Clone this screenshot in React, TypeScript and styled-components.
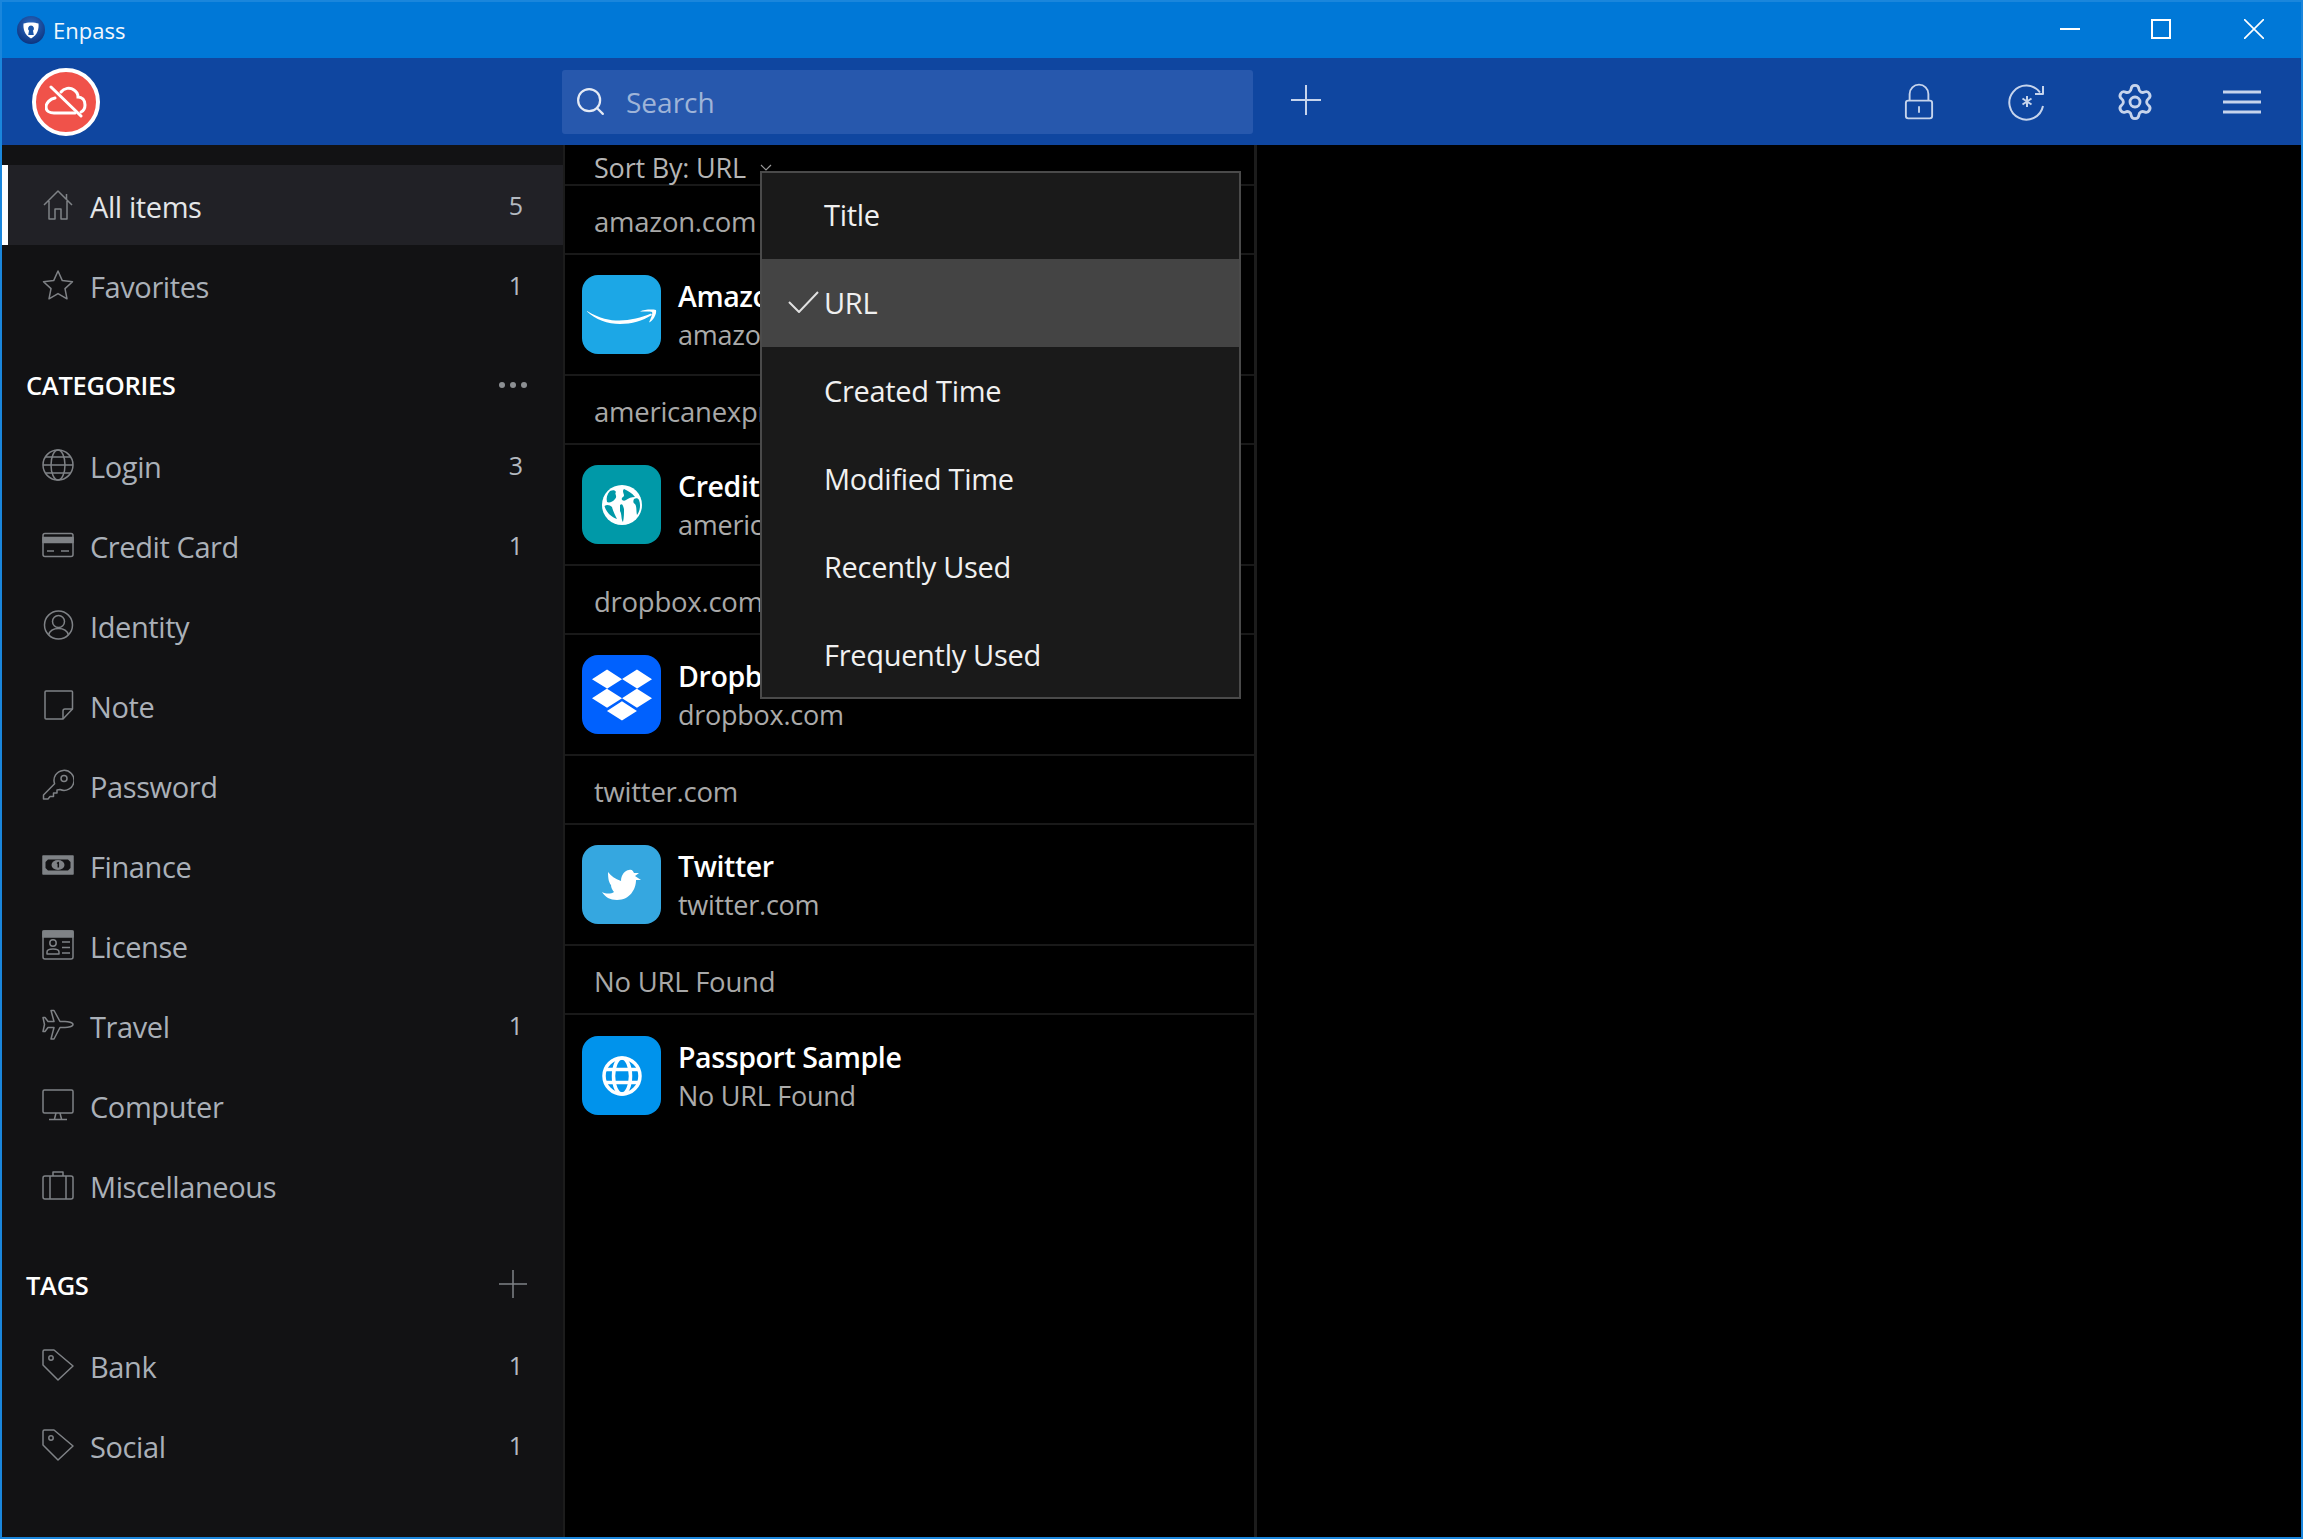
import React from 'react'
import styled, { createGlobalStyle } from 'styled-components'
import { Search as SearchGlyph, Settings } from 'lucide-react'
import { FaDropbox } from 'react-icons/fa'

const GlobalStyle = createGlobalStyle`
  html, body {
    margin: 0;
    padding: 0;
    background: #000;
    font-family: "Open Sans", "Noto Sans", sans-serif;
  }
  * { box-sizing: border-box; }
`

const Stroke: React.FC<{ size?: number; h?: number; vb?: string; width?: number; children: React.ReactNode }> = ({
  size = 32,
  h,
  vb = '0 0 32 32',
  width = 1.5,
  children
}) => (
  <svg
    width={size}
    height={h ?? size}
    viewBox={vb}
    fill="none"
    stroke="currentColor"
    strokeWidth={width}
    strokeLinejoin="round"
  >
    {children}
  </svg>
)

const icons: Record<string, React.ReactNode> = {
  home: (
    <Stroke>
      <path d="M2 16 16 2l14 14M24.500 10.500V5M7 12v18h6V20h6v10h6V12" />
    </Stroke>
  ),
  star: (
    <Stroke>
      <path d="M16 2l4.300 9.600 10.200 1.100L23 19.600l2 10.200-9-5.200-9 5.200 2-10.200-7.500-6.900 10.200-1.100z" />
    </Stroke>
  ),
  globe: (
    <Stroke>
      <circle cx="16" cy="16" r="15" />
      <ellipse cx="16" cy="16" rx="7" ry="15" />
      <path d="M1 16h30M3.500 8h25M3.500 24h25" />
    </Stroke>
  ),
  card: (
    <Stroke>
      <rect x="1" y="4.500" width="30" height="23" rx="2" />
      <rect x="1" y="8.500" width="30" height="5" fill="currentColor" />
      <path d="M5 22h7M19 22h8" />
    </Stroke>
  ),
  identity: (
    <Stroke>
      <circle cx="16.500" cy="16" r="14" />
      <circle cx="16.500" cy="12.500" r="6" />
      <path d="M6.500 26c1.500-5 6-6.500 10-6.500s8.500 1.500 10 6.500" />
    </Stroke>
  ),
  note: (
    <Stroke>
      <path d="M4 2h25.500a1 1 0 0 1 1 1v17L21 30H4a1 1 0 0 1-1-1V3a1 1 0 0 1 1-1z" />
      <path d="M30.500 20H23a2 2 0 0 0-2 2v8" />
    </Stroke>
  ),
  key: (
    <Stroke>
      <path d="M12.600 14.700a10 10 0 1 1 5.400 5.800l-3 .5v3h-3.500v3.500H8L6 30H1.500v-4z" />
      <circle cx="22" cy="9.500" r="3" />
    </Stroke>
  ),
  finance: (
    <Stroke>
      <path d="M1 7h30v18H1z" fill="currentColor" />
      <path d="M6 10.500h20l2.500 2.500v6L26 21.500H6L3.500 19v-6z" fill="#121214" stroke="none" />
      <ellipse cx="16" cy="16" rx="6.500" ry="5" fill="currentColor" stroke="none" />
      <path d="M15 14.500l1.300-1v5" stroke="#121214" />
    </Stroke>
  ),
  license: (
    <Stroke>
      <rect x="1" y="2" width="30" height="28" rx="2" />
      <rect x="1" y="2" width="30" height="6" fill="currentColor" />
      <circle cx="11" cy="14" r="3.200" />
      <path d="M5 25v-2c0-2 2-3 6-3s6 1 6 3v2zM20 13h8M20 18.500h8M20 24h8" />
    </Stroke>
  ),
  plane: (
    <Stroke>
      <path d="M31 15.500c0-2-5-3-8-3h-5L12 1.500H9l3 11H6l-3-4H1l1.500 7L1 22.500h2l3-4h6l-3 11.500h3l6-11.500h5c3 0 8-1 8-3z" />
    </Stroke>
  ),
  monitor: (
    <Stroke>
      <rect x="1" y="1" width="30" height="23" rx="1.500" />
      <path d="M14 24l-1.500 6M18 24l1.500 6M7 30.500h18" />
    </Stroke>
  ),
  case: (
    <Stroke>
      <rect x="1" y="7" width="30" height="23" rx="2" />
      <path d="M11 7V3h10v4M8 7v23M24 7v23" />
    </Stroke>
  ),
  tag: (
    <Stroke>
      <path d="M2.500 1H12l19 16-15 14L1 16V2.500A1.500 1.500 0 0 1 2.500 1z" />
      <circle cx="9" cy="9" r="2.200" />
    </Stroke>
  )
}

const categories = [
  { icon: 'globe', label: 'Login', count: 3 },
  { icon: 'card', label: 'Credit Card', count: 1 },
  { icon: 'identity', label: 'Identity' },
  { icon: 'note', label: 'Note' },
  { icon: 'key', label: 'Password' },
  { icon: 'finance', label: 'Finance' },
  { icon: 'license', label: 'License' },
  { icon: 'plane', label: 'Travel', count: 1 },
  { icon: 'monitor', label: 'Computer' },
  { icon: 'case', label: 'Miscellaneous' }
]

const AmazonIcon = () => (
  <svg width="79" height="79" viewBox="0 0 79 79" fill="#fff">
    <path d="M5 36C18 44 28 45.500 37 45.500 48 45.500 60 42.500 69 38.500L70 40C60 46 50 49 38 49 26 49 13 44.500 5 36.500Z" />
    <path d="M58 36.500C62 34.500 70 34 74 35 75 39 71 46 67 47.500 69 43 71 38.500 70 37 68 36 62 36.500 58 36.500Z" />
  </svg>
)

const EarthIcon = () => (
  <svg width="40" height="40" viewBox="0 0 40 40">
    <circle cx="20" cy="20" r="20" fill="#fff" />
    <g fill="#0099a8">
      <path d="M8 6C11 5 13 5 14 7 12 9 16 11 13 14 11 17 7 18 5 17 4 13 5 9 8 6Z" />
      <path d="M22 4C26 6 30 8 33 12 29 12 27 13 24 15 21 17 18 14 21 12 24 10 19 7 22 4Z" />
      <path d="M2.500 21C5 19 8 20 10 22 11 26 13 30 15 34 9 32 4 27 2.500 21Z" />
      <path d="M18 20C20 18 21 20 22 24 22 28 22 33 21 37 19 35 20 29 18 26Z" />
      <path d="M32 14C34 13 36 13 37 15 39 20 38 26 35 30 34 26 35 22 33 19 31 18 31 16 32 14Z" />
    </g>
  </svg>
)

const BirdIcon = () => (
  <svg width="40" height="32" viewBox="0 0 40 32" fill="#fff">
    <path d="M0 23C4 25 9 25 12 23 10 21 9 18 9 16 7 14 6 10 6 3 9 7 13 10 19 12 19 6 23 1 27 1 30 0 31 2 32 4L37 4 33 7 39 11 34 11C34 20 28 31 15 31 8 31 3 28 0 23Z" />
  </svg>
)

const WebIcon = () => (
  <svg width="40" height="40" viewBox="0 0 40 40" fill="none" stroke="#fff" strokeWidth="3.500">
    <circle cx="20" cy="20" r="18" />
    <ellipse cx="20" cy="20" rx="8.500" ry="18" />
    <path d="M4 13.500h32M4 26.500h32" />
  </svg>
)

const groups = [
  { site: 'amazon.com', title: 'Amazon', sub: 'amazon.com', bg: '#1ca7e6', icon: <AmazonIcon /> },
  { site: 'americanexpress.com', title: 'Credit Card', sub: 'americanexpress.com', bg: '#0099a8', icon: <EarthIcon /> },
  { site: 'dropbox.com', title: 'Dropbox', sub: 'dropbox.com', bg: '#0061fe', icon: <FaDropbox size={60} /> },
  { site: 'twitter.com', title: 'Twitter', sub: 'twitter.com', bg: '#35a7e0', icon: <BirdIcon /> },
  { site: 'No URL Found', title: 'Passport Sample', sub: 'No URL Found', bg: '#0093ec', icon: <WebIcon /> }
]

const sortOptions = ['Title', 'URL', 'Created Time', 'Modified Time', 'Recently Used', 'Frequently Used']

const App: React.FC = () => {
  return (
    <Window>
      <GlobalStyle />
      <TitleBar>
        <TitleLogo>
          <svg width="28" height="28" viewBox="0 0 28 28">
            <defs>
              <radialGradient id="enp" cx="50%" cy="35%" r="65%">
                <stop offset="0%" stopColor="#2f6fc7" />
                <stop offset="100%" stopColor="#0c3480" />
              </radialGradient>
            </defs>
            <circle cx="14" cy="14" r="14" fill="url(#enp)" />
            <path d="M6.500 7.500C10 6 18 6 21.500 7.500 22 13 20.500 19 14 22.500 7.500 19 6 13 6.500 7.500Z" fill="#fff" />
            <path d="M14 9.500a3 3 0 0 1 2 5.200l.8 4.300h-5.600l.8-4.300a3 3 0 0 1 2-5.200Z" fill="#1b55a8" />
          </svg>
        </TitleLogo>
        <TitleText>Enpass</TitleText>
        <WindowButtons>
          <WindowButton>
            <svg width="20" height="20" viewBox="0 0 20 20" stroke="#fff" strokeWidth="2">
              <path d="M0 10h20" />
            </svg>
          </WindowButton>
          <WindowButton>
            <svg width="20" height="20" viewBox="0 0 20 20" fill="none" stroke="#fff" strokeWidth="2">
              <rect x="1" y="1" width="18" height="18" />
            </svg>
          </WindowButton>
          <WindowButton>
            <svg width="20" height="20" viewBox="0 0 20 20" stroke="#fff" strokeWidth="1.600">
              <path d="M0 0l20 20M20 0L0 20" />
            </svg>
          </WindowButton>
        </WindowButtons>
      </TitleBar>

      <Toolbar>
        <SyncBadge>
          <svg width="42" height="34" viewBox="0 0 42 34" fill="none" stroke="#fff" strokeWidth="3" strokeLinecap="round">
            <path d="M10 13C5 14 1 18 1 22 1 26 5 28 9 28L30 28" />
            <path d="M16 7C19 3 25 2 29 5 32 7 33 10 33 12 37 12 40 15 40 20 40 23 38 26 36 27" />
            <path d="M6 2 36 31" />
          </svg>
        </SyncBadge>
        <SearchBox>
          <SearchGlyph size={33} strokeWidth={1.6} color="#e4eaf5" />
          <SearchLabel>Search</SearchLabel>
        </SearchBox>
        <AddButton>
          <Stroke size={30} vb="0 0 30 30" width={2}>
            <path d="M15 0v30M0 15h30" />
          </Stroke>
        </AddButton>
        <ToolActions>
          <ToolIcon>
            <Stroke size={30} h={37} vb="0 0 32 38" width={2}>
              <path d="M6 18V11a10 10 0 0 1 20 0v7" />
              <rect x="2" y="18" width="28" height="19" rx="2.500" />
              <path d="M16 24v7" />
            </Stroke>
          </ToolIcon>
          <ToolIcon>
            <Stroke size={38} vb="0 0 38 38" width={2}>
              <path d="M32 9.500A17 17 0 1 0 35 23" />
              <path d="M35 3v8h-8M19 13v11M14.500 15.500l9 6M23.500 15.500l-9 6" />
            </Stroke>
          </ToolIcon>
          <ToolIcon>
            <Settings size={40} strokeWidth={1.7} />
          </ToolIcon>
          <ToolIcon>
            <Stroke size={38} vb="0 0 38 38" width={3}>
              <path d="M0 9h38M0 19h38M0 29h38" />
            </Stroke>
          </ToolIcon>
        </ToolActions>
      </Toolbar>

      <Body>
        <Sidebar>
          <NavRow $active>
            <NavIcon>{icons.home}</NavIcon>
            <NavLabel $active>All items</NavLabel>
            <NavCount>5</NavCount>
          </NavRow>
          <NavRow>
            <NavIcon>{icons.star}</NavIcon>
            <NavLabel>Favorites</NavLabel>
            <NavCount>1</NavCount>
          </NavRow>
          <SectionHead>
            <SectionTitle>CATEGORIES</SectionTitle>
            <Dots>
              <span />
              <span />
              <span />
            </Dots>
          </SectionHead>
          {categories.map((c) => (
            <NavRow key={c.label}>
              <NavIcon>{icons[c.icon]}</NavIcon>
              <NavLabel>{c.label}</NavLabel>
              {c.count && <NavCount>{c.count}</NavCount>}
            </NavRow>
          ))}
          <SectionHead>
            <SectionTitle>TAGS</SectionTitle>
            <TagAdd>
              <Stroke size={28} vb="0 0 28 28">
                <path d="M14 0v28M0 14h28" />
              </Stroke>
            </TagAdd>
          </SectionHead>
          <NavRow>
            <NavIcon>{icons.tag}</NavIcon>
            <NavLabel>Bank</NavLabel>
            <NavCount>1</NavCount>
          </NavRow>
          <NavRow>
            <NavIcon>{icons.tag}</NavIcon>
            <NavLabel>Social</NavLabel>
            <NavCount>1</NavCount>
          </NavRow>
          <AuditHead>
            <SectionTitle>PASSWORD AUDIT</SectionTitle>
          </AuditHead>
        </Sidebar>

        <ListPane>
          <SortBar>
            <span>Sort By: URL</span>
            <svg width="12" height="8" viewBox="0 0 12 8" fill="none" stroke="#9a9a9a" strokeWidth="1.200">
              <path d="M1 1l5 5 5-5" />
            </svg>
          </SortBar>
          {groups.map((g, i) => (
            <React.Fragment key={g.site}>
              <GroupHead>{g.site}</GroupHead>
              <ItemRow $last={i === groups.length - 1}>
                <ItemIcon $bg={g.bg}>{g.icon}</ItemIcon>
                <ItemText>
                  <ItemTitle>{g.title}</ItemTitle>
                  <ItemSub>{g.sub}</ItemSub>
                </ItemText>
              </ItemRow>
            </React.Fragment>
          ))}
          <SortMenu>
            {sortOptions.map((o) => (
              <SortOption key={o} $selected={o === 'URL'}>
                {o === 'URL' && (
                  <CheckMark>
                    <svg width="31" height="22" viewBox="0 0 31 22" fill="none" stroke="#e0e0e0" strokeWidth="2">
                      <path d="M1 11l10 10L30 1" />
                    </svg>
                  </CheckMark>
                )}
                {o}
              </SortOption>
            ))}
          </SortMenu>
        </ListPane>
      </Body>
    </Window>
  )
}

const Window = styled.div`
  width: 100vw;
  height: 100vh;
  display: flex;
  flex-direction: column;
  overflow: hidden;
  background: #000;
  border: 2px solid #1a86dc;
`

const TitleBar = styled.div`
  height: 56px;
  flex: none;
  display: flex;
  align-items: center;
  padding-left: 15px;
  background: #0078d7;
  color: #fff;
`

const TitleLogo = styled.div`
  width: 28px;
  height: 28px;
  display: flex;
`

const TitleText = styled.div`
  margin-left: 8px;
  font-size: 22px;
  color: #f2f7fc;
`

const WindowButtons = styled.div`
  margin-left: auto;
  margin-top: -2px;
  display: flex;
  gap: 71px;
  padding-right: 37px;
`

const WindowButton = styled.div`
  width: 20px;
  height: 20px;
  display: flex;

  &:last-child {
    margin-left: 2px;
  }
`

const Toolbar = styled.div`
  height: 87px;
  flex: none;
  display: flex;
  align-items: center;
  padding-left: 30px;
  background: #0f46a0;
`

const SyncBadge = styled.div`
  width: 68px;
  height: 68px;
  flex: none;
  display: flex;
  align-items: center;
  justify-content: center;
  border-radius: 50%;
  border: 4px solid #fff;
  background: #f0524a;
`

const SearchBox = styled.div`
  width: 691px;
  height: 64px;
  flex: none;
  margin-left: 462px;
  display: flex;
  align-items: center;
  gap: 19px;
  padding-left: 12px;
  border-radius: 3px;
  background: #2758ad;
`

const SearchLabel = styled.span`
  font-size: 28px;
  color: #9fb4d8;
`

const AddButton = styled.div`
  width: 30px;
  height: 30px;
  margin: -3px 0 0 38px;
  color: #c6d4ec;
`

const ToolActions = styled.div`
  margin-left: auto;
  display: flex;
  align-items: center;
  padding-right: 4px;
  color: #c6d4ec;
`

const ToolIcon = styled.div`
  width: 108px;
  display: flex;
  justify-content: center;

  &:last-child {
    padding-right: 3px;
  }
`

const Body = styled.div`
  flex: 1;
  min-height: 0;
  display: flex;
`

const Sidebar = styled.div`
  width: 561px;
  flex: none;
  padding-top: 20px;
  overflow: hidden;
  background: #121214;
`

const NavRow = styled.div<{ $active?: boolean }>`
  height: 80px;
  display: flex;
  align-items: center;
  padding: 0 40px 0 40px;
  background: ${(p) => (p.$active ? '#212126' : 'transparent')};
  box-shadow: ${(p) => (p.$active ? 'inset 6px 0 0 #fff' : 'none')};
`

const NavIcon = styled.div`
  width: 32px;
  height: 32px;
  flex: none;
  display: flex;
  color: #7f8286;
`

const NavLabel = styled.div<{ $active?: boolean }>`
  margin: 2px 0 0 16px;
  font-size: 29px;
  letter-spacing: -0.4px;
  color: ${(p) => (p.$active ? '#e4e6e8' : '#aab0b8')};
`

const NavCount = styled.div`
  margin-left: auto;
  font-size: 25px;
  color: #b4b9c0;
`

const SectionHead = styled.div`
  height: 100px;
  display: flex;
  align-items: center;
  justify-content: space-between;
  padding: 20px 36px 0 24px;
`

const AuditHead = styled(SectionHead)`
  padding-top: 24px;
`

const SectionTitle = styled.div`
  font-size: 25.5px;
  font-weight: 600;
  letter-spacing: -0.3px;
  color: #fff;
`

const Dots = styled.div`
  display: flex;
  gap: 5px;
  margin-top: 0;

  span {
    width: 6px;
    height: 6px;
    border-radius: 50%;
    background: #8c8f93;
  }
`

const TagAdd = styled.div`
  display: flex;
  margin-top: -2px;
  color: #7f8286;
`

const ListPane = styled.div`
  position: relative;
  width: 694px;
  flex: none;
  border-left: 2px solid #1c1c1c;
  border-right: 3px solid #1c1c1c;
  background: #000;
`

const SortBar = styled.div`
  height: 41px;
  display: flex;
  align-items: center;
  gap: 14px;
  padding: 6px 0 0 29px;
  border-bottom: 2px solid #191919;
  font-size: 27px;
  letter-spacing: -0.2px;
  color: #b5b5b5;
`

const GroupHead = styled.div`
  height: 69px;
  display: flex;
  align-items: center;
  padding: 3px 0 0 29px;
  border-bottom: 2px solid #191919;
  font-size: 27.5px;
  font-weight: 500;
  letter-spacing: -0.25px;
  color: #a8a8a8;
`

const ItemRow = styled.div<{ $last?: boolean }>`
  height: 121px;
  display: flex;
  align-items: center;
  gap: 17px;
  padding-left: 17px;
  border-bottom: ${(p) => (p.$last ? 'none' : '2px solid #191919')};
`

const ItemIcon = styled.div<{ $bg: string }>`
  width: 79px;
  height: 79px;
  flex: none;
  display: flex;
  align-items: center;
  justify-content: center;
  border-radius: 16px;
  color: #fff;
  background: ${(p) => p.$bg};
`

const ItemText = styled.div`
  display: flex;
  flex-direction: column;
  white-space: nowrap;
`

const ItemTitle = styled.div`
  height: 38px;
  line-height: 38px;
  font-size: 28.5px;
  font-weight: 600;
  letter-spacing: -0.4px;
  color: #fff;
`

const ItemSub = styled.div`
  height: 38px;
  line-height: 40px;
  font-size: 27px;
  letter-spacing: -0.25px;
  color: #ababab;
`

const SortMenu = styled.div`
  position: absolute;
  top: 26px;
  left: 195px;
  width: 481px;
  height: 528px;
  overflow: hidden;
  border: 2px solid #4a4a4a;
  background: #1a1a1a;
`

const SortOption = styled.div<{ $selected?: boolean }>`
  position: relative;
  height: 88px;
  display: flex;
  align-items: center;
  top: -2px;
  padding: 0 0 2px 62px;
  font-size: 29px;
  letter-spacing: -0.3px;
  color: #f0f0f0;
  background: ${(p) => (p.$selected ? '#444444' : 'transparent')};
`

const CheckMark = styled.div`
  position: absolute;
  left: 26px;
  top: 32px;
  display: flex;
`

export default App
